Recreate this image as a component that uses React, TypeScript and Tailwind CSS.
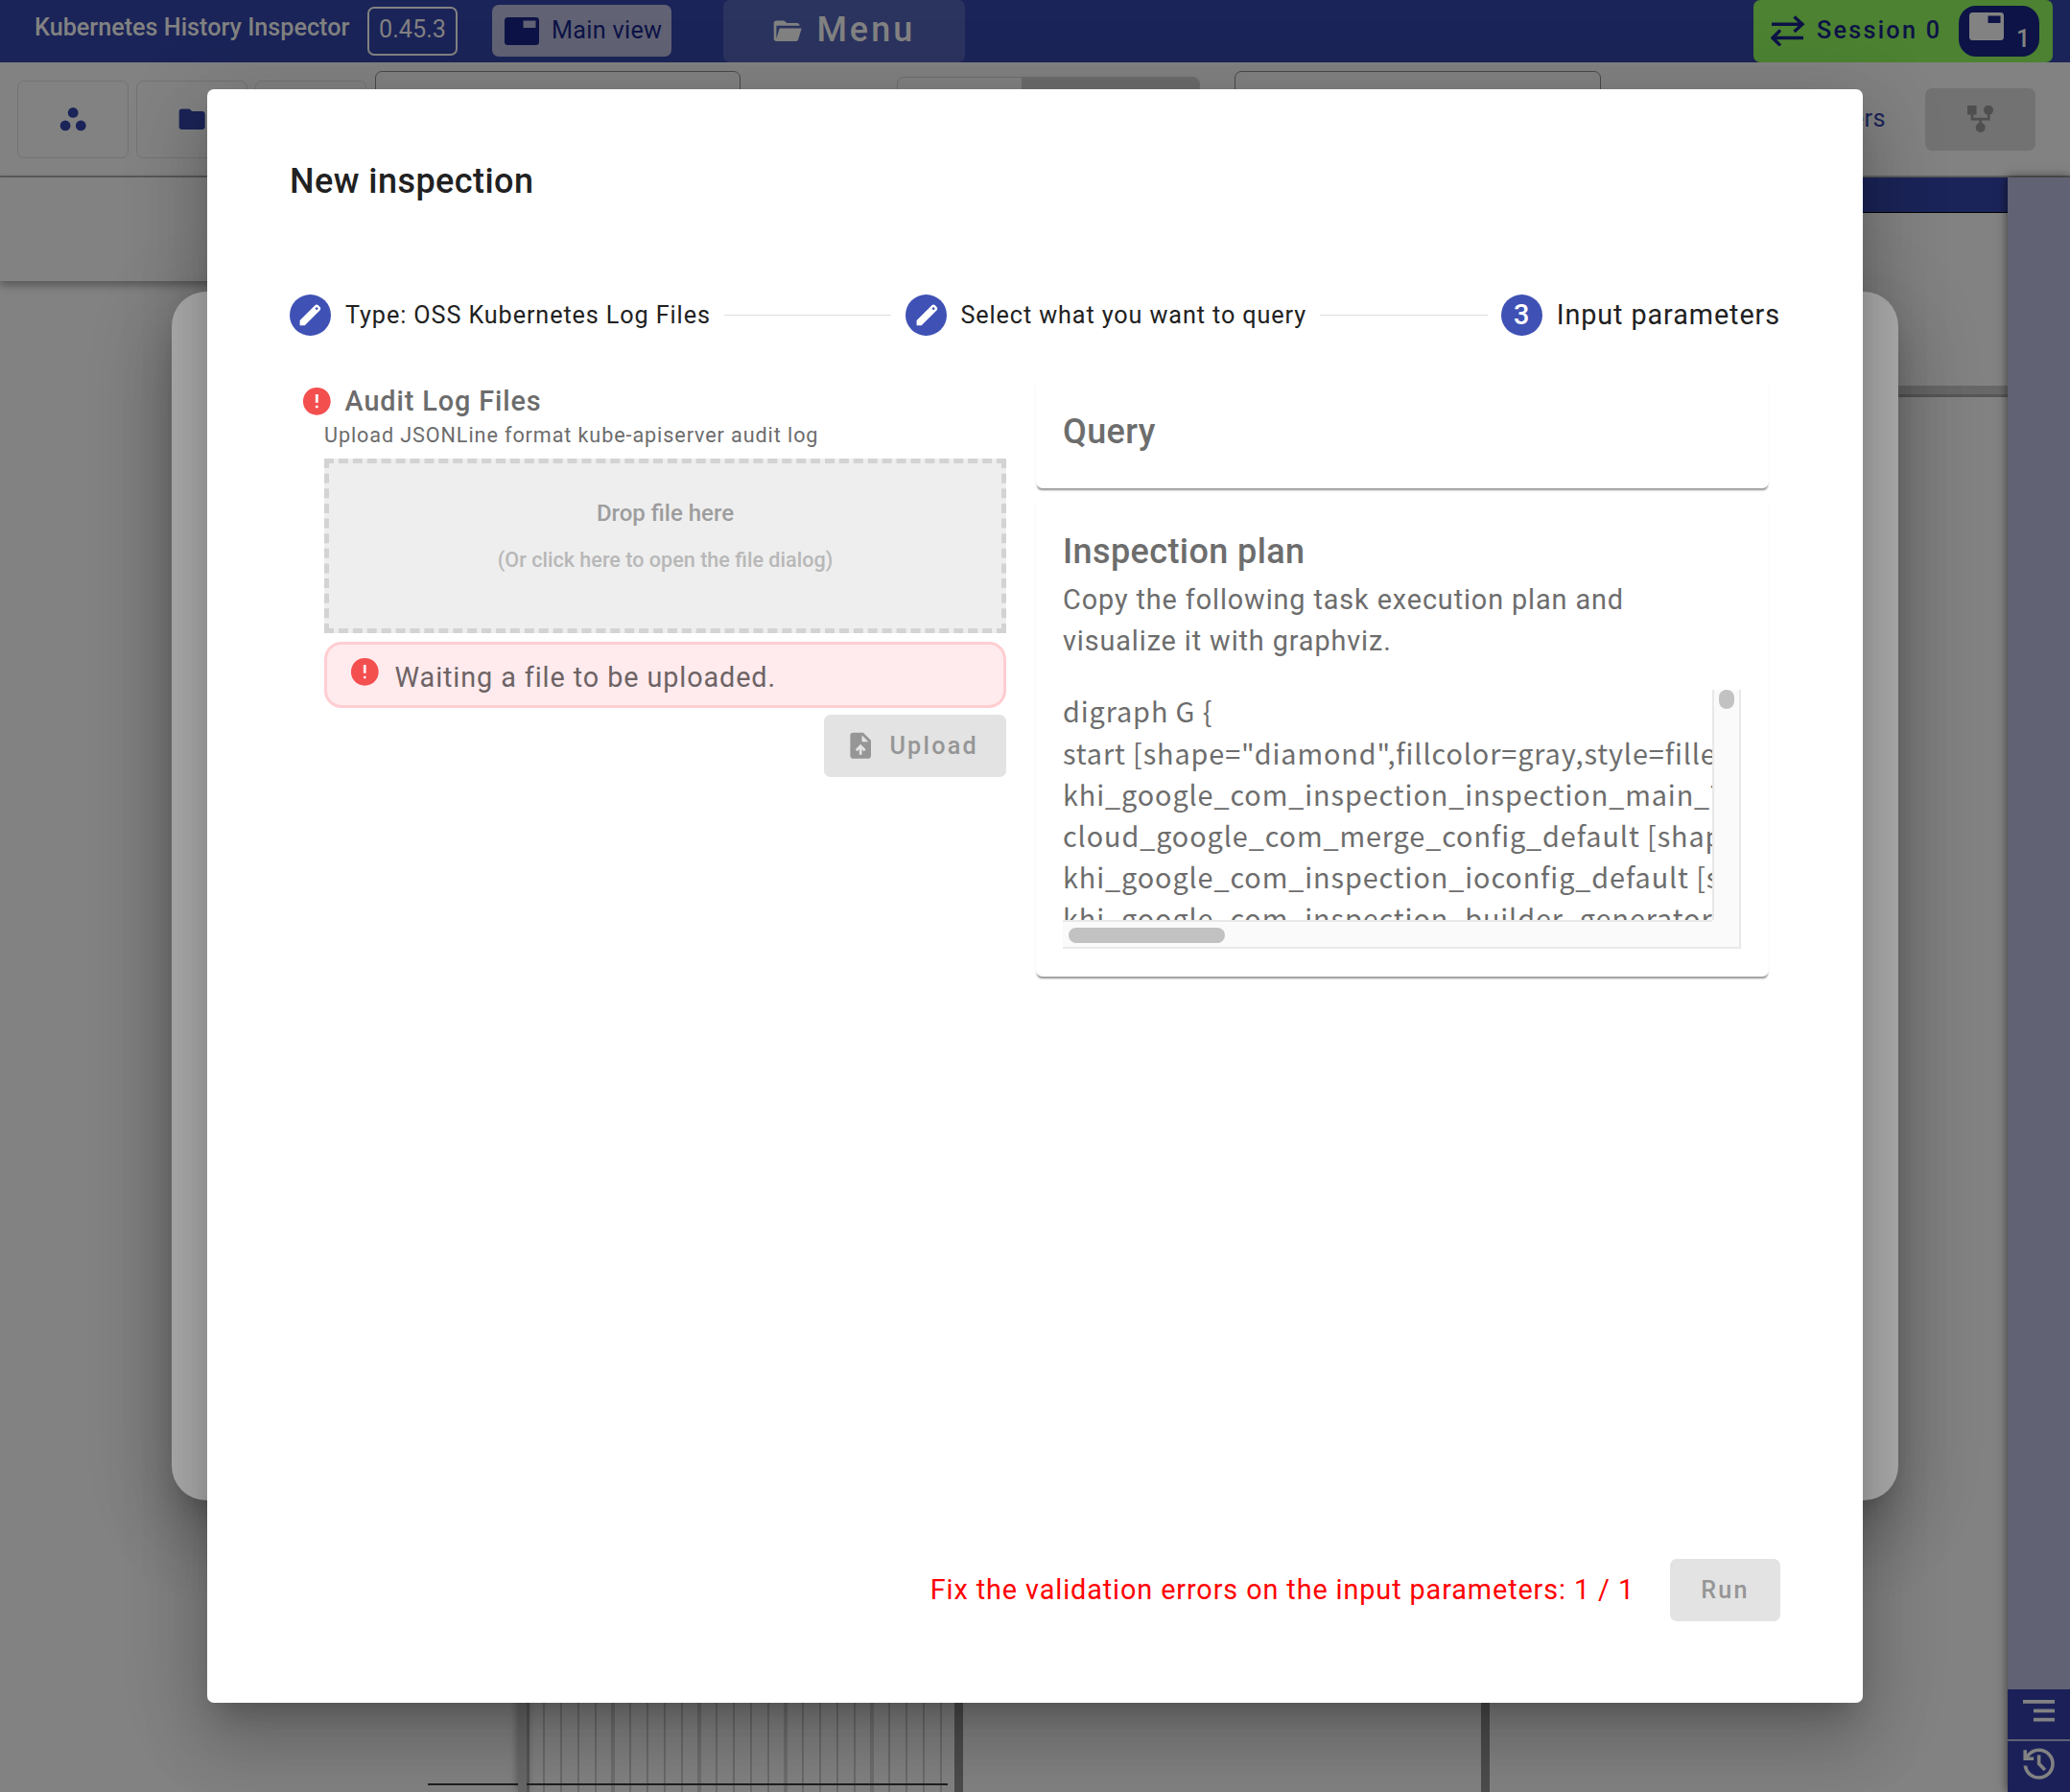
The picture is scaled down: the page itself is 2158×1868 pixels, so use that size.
import type { ReactNode } from 'react';

type IconProps = { d: string; className?: string };

function Sym({ d, className }: IconProps) {
  return (
    <svg viewBox="0 -960 960 960" fill="currentColor" className={className}>
      <path d={d} fillRule="evenodd" />
    </svg>
  );
}

const EDIT =
  'M120-120v-170l528-527q12-11 26.5-17t30.5-6q16 0 31 6t26 18l55 56q12 11 17.5 26t5.5 30q0 16-5.5 30.5T817-647L290-120H120Zm584-528 56-56-56-56-56 56 56 56Z';
const ERROR =
  'M480-280q17 0 28.500-11.500T520-320q0-17-11.500-28.500T480-360q-17 0-28.500 11.500T440-320q0 17 11.500 28.500T480-280Zm-40-160h80v-240h-80v240Zm40 360q-83 0-156-31.500T197-197q-54-54-85.500-127T80-480q0-83 31.500-156T197-763q54-54 127-85.500T480-880q83 0 156 31.500T763-763q54 54 85.500 127T880-480q0 83-31.500 156T763-197q-54 54-127 85.500T480-80Z';
const UPLOAD =
  'M440-200h80v-167l64 64 56-57-160-160-160 160 57 56 63-63v167ZM240-80q-33 0-56.500-23.500T160-160v-640q0-33 23.500-56.500T240-880h320l240 240v480q0 33-23.500 56.500T720-80H240Zm280-520h200L520-800v200Z';
const HISTORY =
  'M480-120q-138 0-240.500-91.500T122-440h82q14 104 92.500 172T480-200q117 0 198.500-81.500T760-480q0-117-81.500-198.500T480-760q-69 0-129 32t-101 88h110v80H120v-240h80v94q51-64 124.500-99T480-840q75 0 140.500 28.500t114 77q48.500 48.500 77 114T840-480q0 75-28.500 140.500t-77 114q-48.500 48.500-114 77T480-120Zm112-192L440-464v-216h80v184l128 128-56 56Z';
const FOLDER_OPEN =
  'M160-160q-33 0-56.500-23.500T80-240v-480q0-33 23.500-56.500T160-800h240l80 80h320q33 0 56.500 23.500T880-640H160v400l96-320h684L837-217q-8 26-29.500 41.500T760-160H160Z';
const FOLDER =
  'M160-160q-33 0-56.500-23.500T80-240v-480q0-33 23.500-56.500T160-800h240l80 80h320q33 0 56.500 23.500T880-640v400q0 33-23.500 56.500T800-160H160Z';

function WindowIcon({ className }: { className?: string }) {
  return (
    <svg viewBox="0 0 36 29" fill="currentColor" className={className}>
      <path fillRule="evenodd" d="M3.500 0h29A3.500 3.500 0 0 1 36 3.500v22a3.500 3.500 0 0 1-3.500 3.500h-29A3.500 3.500 0 0 1 0 25.500v-22A3.500 3.500 0 0 1 3.500 0ZM19.500 3.500v7.500h13V3.500Z" />
    </svg>
  );
}

function Header() {
  return (
    <header className="flex h-[65px] w-full items-start bg-[#1b2458] text-[25.2px] text-[#828282]">
      <span className="ml-[36px] mt-[11px] w-[347px] shrink-0 whitespace-nowrap font-medium leading-[36px]">
        Kubernetes History Inspector
      </span>
      <div className="mt-[7px] flex h-[51px] w-[94px] items-start justify-center rounded-[7px] border-2 border-[#828282] pt-[4px]">
        <span className="leading-[36px]">0.45.3</span>
      </div>
      <div className="ml-[36px] mt-[5px] flex h-[54px] w-[187px] items-center rounded-[7px] bg-[#616274] pl-[13px] text-[#0d1346]">
        <WindowIcon className="h-[29px] w-[36px]" />
        <span className="ml-[13px] whitespace-nowrap tracking-[0.300px]">Main view</span>
      </div>
      <div className="ml-[54px] flex h-[65px] w-[252px] items-start rounded-[7px] bg-[#2b335f] pl-[50px]">
        <Sym d={FOLDER_OPEN} className="mt-[16px] h-[32.400px] w-[32.400px]" />
        <span className="ml-[15px] mt-[10px] text-[36px] font-medium leading-[43px] tracking-[3px]">Menu</span>
      </div>
      <div className="ml-[822px] flex h-[65px] w-[312px] rounded-[7px] bg-[#4c8232] text-[#0d1346]">
        <svg viewBox="0 0 36 32" className="ml-[18px] mt-[16px] h-[32px] w-[36px] shrink-0" fill="none" stroke="currentColor" strokeWidth="3.400">
          <path d="M1 9.300h32M24.500 1.500l8.500 7.800-8.500 7.800M34 23.500H2.500M10 15.500l-8 8 8 8" />
        </svg>
        <span className="ml-[12px] mt-[14px] w-[148px] shrink-0 whitespace-nowrap font-medium leading-[36px] tracking-[2.250px]">
          Session 0
        </span>
        <div className="mt-[6px] flex h-[53px] w-[84px] shrink-0 rounded-[18px] bg-[#0d1346] text-[#828282]">
          <WindowIcon className="ml-[11px] mt-[7px] h-[29px] w-[36px]" />
          <span className="ml-[13px] mt-[17px] font-medium leading-[36px]">1</span>
        </div>
      </div>
    </header>
  );
}

function Toolbar() {
  return (
    <div className="flex h-[120px] w-full items-start border-b-2 border-[#5c5c5c] text-[#1b2458]">
      <div className="ml-[18px] mt-[19px] flex h-[81px] w-[116px] items-center justify-center rounded-[7px] border border-[#737373]">
        <svg viewBox="0 0 24 24" fill="currentColor" className="h-[32.400px] w-[32.400px]">
          <circle cx="12" cy="7" r="4" />
          <circle cx="6" cy="17" r="4" />
          <circle cx="18" cy="17" r="4" />
        </svg>
      </div>
      <div className="ml-[8px] mt-[19px] flex h-[81px] w-[116px] items-center justify-center rounded-[7px] border border-[#737373]">
        <Sym d={FOLDER} className="h-[32.400px] w-[32.400px]" />
      </div>
      <div className="ml-[8px] mt-[19px] h-[81px] w-[116px] rounded-[7px] border border-[#737373]" />
      <div className="ml-[9px] mt-[9px] h-[90px] w-[381px] rounded-[7px] border border-[#4a4a4a]" />
      <div className="ml-[163px] mt-[15px] flex h-[80px] w-[316px] overflow-hidden rounded-[7px] border border-[#6e6e6e]">
        <div className="w-[129px]" />
        <div className="flex-1 bg-[#6c6c6c]" />
      </div>
      <div className="ml-[36px] mt-[9px] h-[90px] w-[382px] rounded-[7px] border border-[#4a4a4a]" />
      <div className="mt-[41px] w-[297px] text-right text-[25.200px] leading-[36px] tracking-[0.450px]">
        Parameters
      </div>
      <div className="ml-[41px] mt-[27px] flex h-[65px] w-[115px] items-start rounded-[7px] bg-[#727272] text-[#4f4f4f]">
        <svg viewBox="0 0 28 28" className="ml-[44px] mt-[18px] h-[28px] w-[28px]" fill="currentColor">
          <rect x="0" y="0" width="9.500" height="9.500" />
          <circle cx="22" cy="4.700" r="5" />
          <circle cx="13.700" cy="23" r="5" />
          <path d="M5 8v6.200h17.300V8M13.700 14v6" fill="none" stroke="currentColor" strokeWidth="2.700" />
        </svg>
      </div>
    </div>
  );
}

function Workspace() {
  return (
    <div className="flex h-[1683px] w-full">
      <div className="flex w-[995px] flex-col">
        <div className="h-[108px] shrink-0 shadow-[0_4px_9px_rgba(0,0,0,0.35)]" />
        <div className="flex flex-1">
          <div className="flex w-[540px] flex-col justify-end">
            <div className="mb-[7px] ml-[446px] h-[2px] bg-[#202020]" />
          </div>
          <div className="w-[9px] bg-[#686868] shadow-[0_0_9px_rgba(0,0,0,0.4)]" />
          <div className="flex w-[439px] flex-col justify-end border-l-[3px] border-[#565656] bg-[repeating-linear-gradient(90deg,transparent_0_85px,#6e6e6e_85px_89px,transparent_89px_90px),repeating-linear-gradient(90deg,transparent_0_13.500px,#6b6b6b_14px_15.500px,transparent_16px_18px)]">
            <div className="-ml-[3px] mb-[7px] h-[2px] bg-[#202020]" />
          </div>
        </div>
      </div>
      <div className="w-[9px] bg-[#4c4c4c]" />
      <div className="flex w-[1089px] flex-col">
        <div className="h-[37px] border-b border-black bg-[#1b2458]" />
        <div className="h-[180px]" />
        <div className="h-[12px] border-b-[3px] border-[#575757] bg-[#686868]" />
        <div className="ml-[540px] w-[9px] flex-1 bg-[#4c4c4c]" />
      </div>
      <div className="flex w-[65px] flex-col justify-end bg-[#616274] text-[#828282] shadow-[0_0_10px_rgba(0,0,0,0.6)]">
        <div className="mb-[2px] flex h-[52px] justify-center bg-[#1b2158]">
          <svg viewBox="0 0 33 23" fill="currentColor" className="mt-[11px] h-[23px] w-[33px]">
            <path d="M0 0h33v3.700H0zM11 9.500h22v3.700H11zM11 18.700h22v3.700H11z" />
          </svg>
        </div>
        <div className="flex h-[53px] justify-center bg-[#1b2158]">
          <Sym d={HISTORY} className="mt-[2px] h-[43.200px] w-[43.200px]" />
        </div>
      </div>
    </div>
  );
}

function StepDot({ children }: { children: ReactNode }) {
  return (
    <div className="flex h-[43px] w-[43px] shrink-0 items-center justify-center rounded-full bg-[#3f51b5] text-white">
      {children}
    </div>
  );
}

function Stepper() {
  return (
    <div className="mt-[96px] flex h-[43px] items-center text-[25.200px] text-[#212121]">
      <StepDot>
        <Sym d={EDIT} className="h-[28.800px] w-[28.800px]" />
      </StepDot>
      <span className="ml-[15px] whitespace-nowrap tracking-[0.900px]">Type: OSS Kubernetes Log Files</span>
      <div className="ml-[14px] mr-[15px] h-px flex-1 bg-[#dedede]" />
      <StepDot>
        <Sym d={EDIT} className="h-[28.800px] w-[28.800px]" />
      </StepDot>
      <span className="ml-[14px] whitespace-nowrap tracking-[0.900px]">Select what you want to query</span>
      <div className="ml-[14px] mr-[14px] h-px flex-1 bg-[#dedede]" />
      <StepDot>
        <span className="text-[28.800px] font-medium">3</span>
      </StepDot>
      <span className="ml-[15px] whitespace-nowrap text-[28.800px] tracking-[0.900px]">Input parameters</span>
    </div>
  );
}

function FileForm() {
  return (
    <section className="mt-[51px] w-[747px] text-[#6c6c6c]">
      <div className="flex h-[35px] items-center">
        <Sym d={ERROR} className="ml-[11px] h-[34.600px] w-[34.600px] text-[#f44f4f]" />
        <span className="ml-[12px] whitespace-nowrap text-[28.800px] font-medium tracking-[0.900px]">Audit Log Files</span>
      </div>
      <div className="ml-[36px] h-[36px] whitespace-nowrap text-[21.600px] leading-[36px] tracking-[0.900px]">
        Upload JSONLine format kube-apiserver audit log
      </div>
      <div className="ml-[36px] mt-[6px] flex h-[182px] w-[711px] flex-col items-center border-[5px] border-dashed border-[#d3d3d3] bg-[#eee] pt-[34px] font-medium leading-[36px]">
        <span className="text-[24px] text-[#9d9d9d]">Drop file here</span>
        <span className="mt-[13px] text-[21.600px] text-[#b8b8b8]">(Or click here to open the file dialog)</span>
      </div>
      <div className="ml-[36px] mt-[9px] flex h-[69px] w-[711px] items-start rounded-[18px] border-[3px] border-[#ffcdd2] bg-[#ffebee]">
        <Sym d={ERROR} className="ml-[22px] mt-[11px] h-[34.600px] w-[34.600px] text-[#f44f4f]" />
        <span className="ml-[14px] mt-[13px] text-[28.800px] leading-[43px] tracking-[0.900px] text-[#6d6365]">
          Waiting a file to be uploaded.
        </span>
      </div>
      <div className="mt-[7px] flex justify-end">
        <div className="flex h-[65px] w-[190px] items-center rounded-[7px] bg-[#e3e3e3] pl-[22px] text-[25.200px] text-[#969696]">
          <Sym d={UPLOAD} className="h-[32.400px] w-[32.400px]" />
          <span className="ml-[14px] font-medium tracking-[2.250px]">Upload</span>
        </div>
      </div>
    </section>
  );
}

const PLAN = [
  'start [shape="diamond",fillcolor=gray,style=filled]',
  'khi_google_com_inspection_inspection_main_Thread_default',
  'cloud_google_com_merge_config_default [shape="circle"]',
  'khi_google_com_inspection_ioconfig_default [shape="circle"]',
  'khi_google_com_inspection_builder_generator_default',
];

function SidePanel() {
  return (
    <section className="ml-[31px] mt-[44px] flex w-[764px] flex-col gap-[9px] text-[#6d6d6d]">
      <div className="h-[115px] rounded-[7px] bg-white pl-[28px] pt-[35px] shadow-[0_3.600px_1.800px_-1.800px_rgba(0,0,0,0.36),0_3px_4px_-2px_rgba(0,0,0,0.12)]">
        <h2 className="text-[36px] font-medium leading-[43px] tracking-[0.400px]">Query</h2>
      </div>
      <div className="h-[500px] rounded-[7px] bg-white pl-[28px] pt-[36px] shadow-[0_3.600px_1.800px_-1.800px_rgba(0,0,0,0.36),0_3px_4px_-2px_rgba(0,0,0,0.12)]">
        <h2 className="text-[36px] font-medium leading-[43px] tracking-[0.400px]">Inspection plan</h2>
        <p className="mt-[7px] w-[640px] text-[28.800px] leading-[43.200px] tracking-[0.900px]">
          Copy the following task execution plan and visualize it with graphviz.
        </p>
        <div className="mt-[29px] grid h-[270px] w-[707px] grid-cols-[677px_30px] grid-rows-[240px_30px]">
          <pre className="overflow-hidden font-['Noto_Sans_CJK_JP',sans-serif] text-[28.800px] leading-[43px] tracking-[0.900px]">
            <div className="h-[44px]">{'digraph G {'}</div>
            {PLAN.map((line) => (
              <div key={line} className="h-[43px]">{line}</div>
            ))}
          </pre>
          <div className="flex justify-center border-x-2 border-[#e8e8e8] bg-[#fafafa]">
            <div className="h-[20px] w-[16px] rounded-full bg-[#c2c2c2]" />
          </div>
          <div className="border-b-2 border-t-2 border-[#e8e8e8] bg-[#fafafa] pl-[6px] pt-[6px]">
            <div className="h-[16px] w-[163px] rounded-full bg-[#c2c2c2]" />
          </div>
          <div className="border-b-2 border-r-2 border-[#e8e8e8] bg-[#fafafa]" />
        </div>
      </div>
    </section>
  );
}

function InspectionDialog() {
  return (
    <div className="absolute left-[216px] top-[93px] flex h-[1682px] w-[1726px] flex-col rounded-[7px] bg-white px-[86px] pt-[74px] shadow-[0_20px_27px_-13px_rgba(0,0,0,0.2),0_43px_68px_5px_rgba(0,0,0,0.14),0_16px_83px_14px_rgba(0,0,0,0.12)]">
      <h1 className="-mb-px text-[36px] font-medium leading-[45px] tracking-[0.450px] text-[#212121]">New inspection</h1>
      <Stepper />
      <div className="flex h-[1275px]">
        <FileForm />
        <SidePanel />
      </div>
      <div className="flex h-[65px] items-center justify-end">
        <span className="whitespace-nowrap text-[28.800px] tracking-[0.900px] text-[#ff0000]">
          Fix the validation errors on the input parameters: 1 / 1
        </span>
        <div className="ml-[37px] flex h-[65px] w-[115px] items-center justify-center rounded-[7px] bg-[#e3e3e3] text-[25.200px] font-medium tracking-[2.250px] text-[#969696]">
          Run
        </div>
      </div>
    </div>
  );
}

export default function App() {
  return (
    <div className="relative h-[1868px] w-[2158px] overflow-hidden bg-[#828282] font-['Roboto',sans-serif]">
      <Header />
      <Toolbar />
      <Workspace />
      <div className="absolute left-[179px] top-[304px] h-[1260px] w-[1800px] rounded-[36px] bg-[#adadad] shadow-[0_20px_27px_-13px_rgba(0,0,0,0.2),0_43px_68px_5px_rgba(0,0,0,0.14),0_16px_83px_14px_rgba(0,0,0,0.12)]" />
      <InspectionDialog />
    </div>
  );
}
